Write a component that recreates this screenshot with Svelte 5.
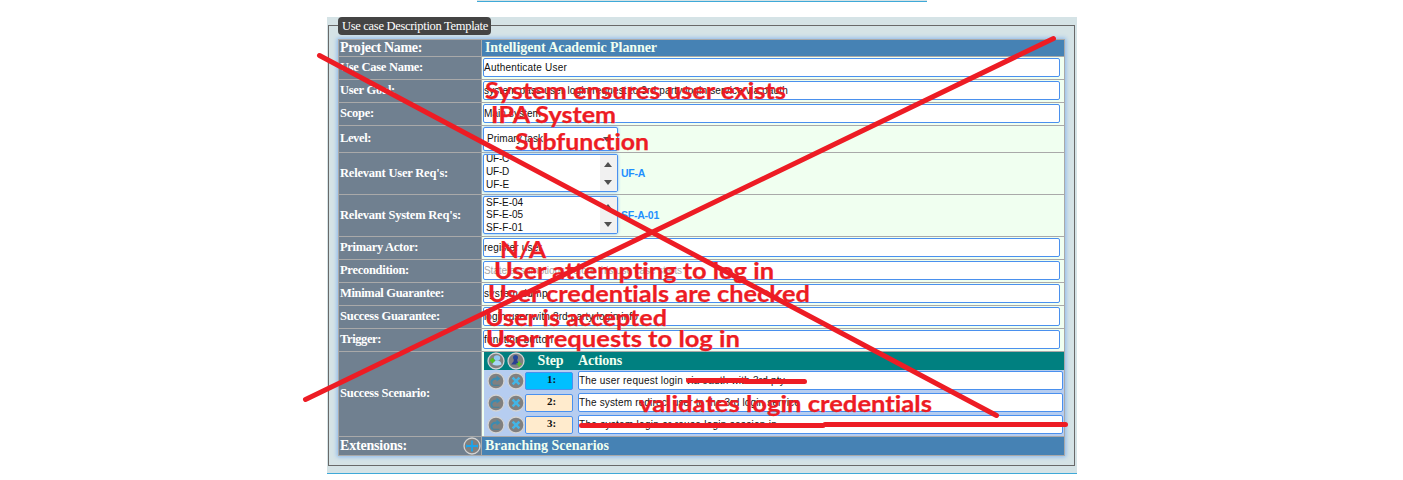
<script>
  function fit(node, width) {
    if (!width) return;
    const natural = node.getBoundingClientRect().width;
    node.style.letterSpacing = `${(width - natural) / node.textContent.length}px`;
  }

  const basics = [
    { label: 'Use Case Name:', lw: 83, value: 'Authenticate User', w: 83 },
    { label: 'User Goal:', lw: 55, value: 'system pass user login request to 3rd party login service via oauth', w: 304 },
    { label: 'Scope:', lw: 34, value: 'Main system', w: 57 }
  ];
  const lists = [
    { label: "Relevant User Req's:", lw: 108, cut: true, options: ['UF-C', 'UF-D', 'UF-E'], ow: 23, chosen: 'UF-A', cw: 24 },
    { label: "Relevant System Req's:", lw: 121, cut: false, options: ['SF-E-04', 'SF-E-05', 'SF-F-01'], ow: 37, chosen: 'SF-A-01', cw: 38 }
  ];
  const details = [
    { label: 'Primary Actor:', lw: 78, value: 'register user', w: 58 },
    { label: 'Precondition:', lw: 69, value: 'State assumptions before this use case starts', w: 198, hint: true },
    { label: 'Minimal Guarantee:', lw: 104, value: 'system dump', w: 64 },
    { label: 'Success Guarantee:', lw: 100, value: 'login user with 3rd party login info', w: 154 },
    { label: 'Trigger:', lw: 41, value: 'function button', w: 69 }
  ];
  const steps = [
    { n: '1:', value: 'The user request login via oauth with 3rd pty', w: 206, active: true },
    { n: '2:', value: 'The system redirect user to the 3rd login service', w: 221 },
    { n: '3:', value: 'The system login or reuse login session in', w: 198 }
  ];
  const notes = [
    { t: 'System ensures user exists', x: 485, y: 99, w: 301 },
    { t: 'IPA System', x: 491, y: 123, w: 125 },
    { t: 'Subfunction', x: 515, y: 150, w: 134 },
    { t: 'N/A', x: 500, y: 258, w: 46 },
    { t: 'User attempting to log in', x: 494, y: 279, w: 280 },
    { t: 'User credentials are checked', x: 488, y: 302, w: 322 },
    { t: 'User is accepted', x: 485, y: 326, w: 182 },
    { t: 'User requests to log in', x: 486, y: 347, w: 254 },
    { t: 'validates login credentials', x: 639, y: 412, w: 293 }
  ];
</script>

{#snippet disc(kind)}
  <svg class="disc" viewBox="0 0 18 18">
    <circle cx="9" cy="9" r="8" fill="#808080" stroke="#d3d3d3" stroke-width="1.3" />
    {#if kind === 'system'}
      <ellipse cx="10" cy="6" rx="3.2" ry="2.8" fill="#8fc9f2" />
      <path d="M5.5 12.5Q6 8.5 10 8.5t4.5 4q-4.500 2-9 0z" fill="#a9d8f5" />
      <path d="M3 8.500h5M5.500 6v5" stroke="#4fc31e" stroke-width="1.900" />
    {:else if kind === 'user'}
      <circle cx="8.500" cy="5.500" r="2.500" fill="#23479c" />
      <path d="M7 7h3l.5 2.500 2.500 3H4l2.500-3z" fill="#2a3f93" />
      <path d="M9.500 12h5M12 9.500v5" stroke="#5fc226" stroke-width="1.700" />
    {:else if kind === 'redo'}
      <path d="M5.500 13.300C3 9.500 5 6.200 10.500 6.500" fill="none" stroke="#3c8bb0" stroke-width="1.800" />
      <path d="M9.500 3.500L13.500 6.700L9.500 9.500z" fill="#3c8bb0" />
      <path d="M5.500 13.300h7" stroke="#4b8299" stroke-width="1.200" />
    {:else if kind === 'remove'}
      <path d="M5.600 5.600l6.800 6.800M12.400 5.600l-6.800 6.800" stroke="#43b5e6" stroke-width="2.500" />
    {:else}
      <path d="M3.500 9h11M9 3.500v11" stroke="#1ba4ec" stroke-width="1.800" />
      <path d="M3.500 7.500v3M14.500 7.500v3" stroke="#1ba4ec" />
    {/if}
  </svg>
{/snippet}

{#snippet head(text, width)}
  <div class="label"><span use:fit={width}>{text}</span></div>
{/snippet}

{#snippet field(row)}
  {@render head(row.label, row.lw)}
  <div class="cell">
    <div class="input" class:hint={row.hint}><span use:fit={row.w}>{row.value}</span></div>
  </div>
{/snippet}

<main>
  <div class="topline"></div>
  <section>
    <div class="legend"><span use:fit={146}>Use case Description Template</span></div>
    <div class="frame">
      <div class="table">
        <div class="label big"><span use:fit={82}>Project Name:</span></div>
        <div class="title"><span use:fit={172}>Intelligent Academic Planner</span></div>
        {#each basics as row}{@render field(row)}{/each}
        {@render head('Level:', 31)}
        <div class="cell">
          <div class="select"><span use:fit={56}>Primary task</span><i class="down"></i></div>
        </div>
        {#each lists as row}
          <div class="label listlabel"><span use:fit={row.lw}>{row.label}</span></div>
          <div class="cell listcell">
            <div class="list">
              <div class="options" class:cut={row.cut}>
                {#each row.options as option}<div><span use:fit={row.ow}>{option}</span></div>{/each}
              </div>
              <div class="scroll"><i class="up"></i><i class="down"></i></div>
            </div>
            <b class="chosen"><span use:fit={row.cw}>{row.chosen}</span></b>
          </div>
        {/each}
        {#each details as row}{@render field(row)}{/each}
        {@render head('Success Scenario:', 90)}
        <div class="cell scenario">
          <div class="stephead">
            {@render disc('system')}{@render disc('user')}
            <b class="stepname"><span use:fit={26}>Step</span></b>
            <b><span use:fit={44}>Actions</span></b>
          </div>
          <div class="steps">
            {#each steps as step}
              <div class="step">
                {@render disc('redo')}{@render disc('remove')}
                <div class="number" class:active={step.active}>{step.n}</div>
                <div class="input"><span use:fit={step.w}>{step.value}</span></div>
              </div>
            {/each}
          </div>
        </div>
        <div class="label big ext"><span use:fit={67}>Extensions:</span>{@render disc('add')}</div>
        <div class="title last"><span use:fit={124}>Branching Scenarios</span></div>
      </div>
    </div>
  </section>
  <svg class="markup" width="1403" height="480" viewBox="0 0 1403 480">
    <g fill="none" stroke="#ed1c24" stroke-width="5" stroke-linecap="round">
      <path d="M319.500 55.500L996.500 415.500" />
      <path d="M305.500 399.500L1053.500 38.500" />
      <path d="M688.500 380.500H746M745 381.500H804.500" />
      <path d="M581.500 425.500H823M825 424.500H1065.500" />
    </g>
    {#each notes as note}
      <text x={note.x} y={note.y} textLength={note.w} lengthAdjust="spacingAndGlyphs">{note.t}</text>
    {/each}
  </svg>
</main>

<style>
  :global(body) { margin: 0; background: #fff; overflow: hidden; }
  main { position: relative; width: 1403px; height: 480px; overflow: hidden; font-family: "Liberation Serif", serif; }
  span { white-space: pre; display: inline-block; }
  .topline { width: 450px; height: 1px; margin-left: 477px; background: #d5e3e6; border-bottom: 1px solid #3fa9d8; }
  section { box-sizing: border-box; width: 750px; height: 457px; margin: 15px 0 0 327px; padding: 8px 2px 0 1px; background: #d5e3e6; border-bottom: 1px solid #3fa9d8; position: relative; }
  .frame { box-sizing: border-box; width: 747px; height: 441px; border: 1px solid #696969; padding: 13px 0 0 9px; }
  .legend { position: absolute; left: 11px; top: 0; box-sizing: border-box; width: 153px; height: 18px; padding-left: 4px; background: #444; color: #fff; border-radius: 4px; font-size: 12.500px; line-height: 18px; }
  .table { box-sizing: border-box; width: 727px; height: 417px; display: grid; grid-template-columns: 142px 582px; grid-template-rows: 16px 22px 22px 22px 26px 41px 41px 22px 22px 22px 22px 22px 84px 18px; gap: 1px; padding: 1px; background: #a9a9a9; box-shadow: 0 0 4px 1px #8bb9ee; }
  .label { background: #708090; color: #fff; font-weight: bold; font-size: 12.500px; padding: 0 0 2px 1px; display: flex; align-items: center; min-height: 0; }
  .listlabel { padding-bottom: 0; }
  .big { font-size: 14px; padding-bottom: 0; line-height: 16px; }
  .title { background: #4682b4; color: #f0fff0; font-weight: bold; font-size: 14px; padding-left: 3px; line-height: 16px; min-height: 0; }
  .last { line-height: 18px; }
  .ext { justify-content: space-between; padding-bottom: 1px; }
  .cell { background: #f0fff0; padding: 1px 0 0 1px; min-height: 0; min-width: 0; }
  .input { box-sizing: border-box; width: 577px; height: 19px; border: 1px solid #4a90ee; border-radius: 2px; background: #fff; color: #111; font: 10px/18px "Liberation Sans", sans-serif; }
  .hint { color: #a9a9a9; }
  .select { box-sizing: border-box; width: 135px; height: 24px; border: 1px solid #4a90ee; border-radius: 2px; box-shadow: 0 0 3px #7db2f5; background: #fff; color: #111; font: 10px/22px "Liberation Sans", sans-serif; padding: 0 6px 0 3px; display: flex; justify-content: space-between; align-items: center; }
  i { display: block; width: 0; height: 0; border: 4px solid transparent; }
  .down { border-top: 5px solid #505050; border-bottom: 0; }
  .up { border-bottom: 5px solid #505050; border-top: 0; }
  .listcell { display: flex; align-items: center; padding: 0 0 2px 1px; gap: 3px; }
  .list { box-sizing: border-box; width: 135px; height: 38px; border: 1px solid #4a90ee; border-radius: 2px; box-shadow: 0 0 3px #7db2f5; background: #fff; display: flex; justify-content: space-between; overflow: hidden; }
  .options { padding-left: 2px; font: 10px/12.500px "Liberation Sans", sans-serif; color: #111; }
  .cut { margin-top: -3px; line-height: 13px; }
  .scroll { width: 17px; background: #f1f1f1; display: flex; flex-direction: column; align-items: center; justify-content: space-between; padding: 7px 1px 6px 0; box-sizing: border-box; }
  .chosen { color: #1e90ff; font: bold 10.500px/14px "Liberation Sans", sans-serif; }
  .scenario { padding: 0 0 0 2px; }
  .stephead { height: 18px; background: #008080; color: #f0fff0; display: flex; align-items: center; gap: 2px; padding-left: 3px; font-size: 14px; line-height: 18px; }
  .stepname { width: 47px; text-align: center; margin-right: 2px; }
  .steps { height: 66px; background: #b6cdf0; }
  .step { height: 22px; display: flex; align-items: center; gap: 2px; padding-left: 3px; }
  .step .input { width: 485px; margin-left: 3px; margin-top: -1px; }
  .number { box-sizing: border-box; width: 48px; height: 18px; margin: -1px 0 0 -2px; border: 1px solid #4a90ee; border-radius: 2px; background: #ffebcd; color: #111; font-weight: bold; font-size: 11px; line-height: 12px; text-align: center; padding-left: 5px; }
  .active { background: #00bfff; }
  .disc { width: 18px; height: 18px; flex: none; display: block; }
  .markup { position: absolute; left: 0; top: 0; }
  .markup text { fill: #ed1c24; stroke: #ed1c24; stroke-width: .25px; font: bold 23.500px Lato, sans-serif; font-variant-ligatures: none; }
</style>
